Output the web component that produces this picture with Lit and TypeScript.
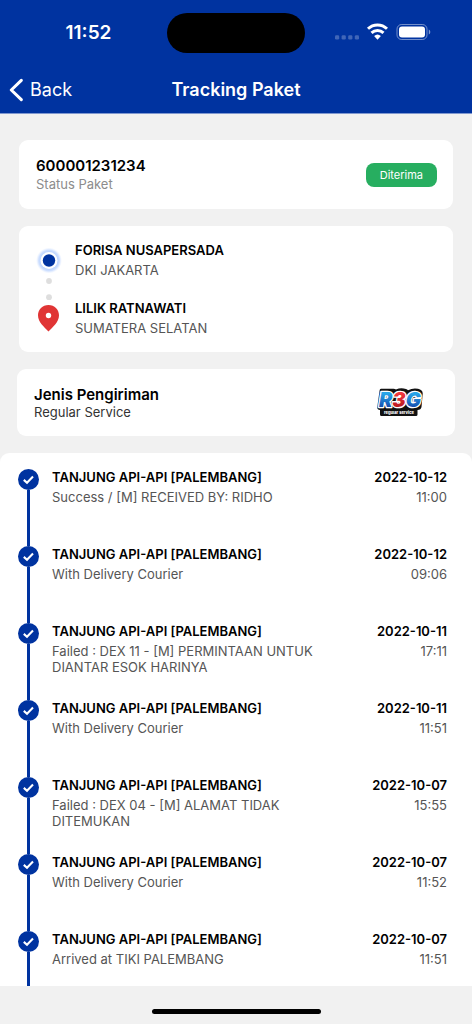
import { LitElement, html, css } from "lit";
import { customElement, property } from "lit/decorators.js";

interface TrackingEvent {
  place: string;
  note: string;
  date: string;
  time: string;
}

const EVENTS: TrackingEvent[] = [
  { place: "TANJUNG API-API [PALEMBANG]", note: "Success / [M] RECEIVED BY: RIDHO", date: "2022-10-12", time: "11:00" },
  { place: "TANJUNG API-API [PALEMBANG]", note: "With Delivery Courier", date: "2022-10-12", time: "09:06" },
  { place: "TANJUNG API-API [PALEMBANG]", note: "Failed : DEX 11 - [M] PERMINTAAN UNTUK DIANTAR ESOK HARINYA", date: "2022-10-11", time: "17:11" },
  { place: "TANJUNG API-API [PALEMBANG]", note: "With Delivery Courier", date: "2022-10-11", time: "11:51" },
  { place: "TANJUNG API-API [PALEMBANG]", note: "Failed : DEX 04 - [M] ALAMAT TIDAK DITEMUKAN", date: "2022-10-07", time: "15:55" },
  { place: "TANJUNG API-API [PALEMBANG]", note: "With Delivery Courier", date: "2022-10-07", time: "11:52" },
  { place: "TANJUNG API-API [PALEMBANG]", note: "Arrived at TIKI PALEMBANG", date: "2022-10-07", time: "11:51" },
];

@customElement("status-bar")
export class StatusBar extends LitElement {
  static styles = css`
    :host {
      display: grid;
      grid-template-columns: 1fr 138px 1fr;
      align-items: center;
      height: 66px;
    }
    .clock {
      justify-self: center;
      padding-left: 10px;
      font-size: 19px;
      font-weight: 600;
      line-height: 24px;
    }
    .island {
      height: 40px;
      border-radius: 20px;
      background: #000;
    }
    .signals {
      display: flex;
      justify-content: flex-end;
      align-items: center;
      padding-right: 40px;
    }
    .signals svg {
      display: block;
    }
  `;

  render() {
    return html`
      <span class="clock">11:52</span>
      <span class="island"></span>
      <span class="signals">
        <svg width="98" height="20" viewBox="0 0 98 20" aria-hidden="true">
          <g fill="#fff" fill-opacity=".25">
            <rect x="1" y="12.3" width="4.2" height="4.2" rx="1.3" />
            <rect x="7.6" y="12.3" width="4.2" height="4.2" rx="1.3" />
            <rect x="14.2" y="12.3" width="4.2" height="4.2" rx="1.3" />
            <rect x="20.8" y="12.3" width="4.2" height="4.2" rx="1.3" />
          </g>
          <g fill="none" stroke="#fff" stroke-width="2.9">
            <path d="M34 5.800a13.600 13.600 0 0 1 19 0" />
            <path d="M37.500 9.900a8.600 8.600 0 0 1 12 0" />
          </g>
          <path fill="#fff" d="M40.100 13.100a5 5 0 0 1 6.800 0l-3.400 3.600z" />
          <rect x="63" y="1.500" width="30" height="15" rx="4.600" fill="none" stroke="#fff" stroke-opacity=".45" />
          <rect x="65" y="3.500" width="26" height="11" rx="3" fill="#fff" />
          <path d="M94.800 6.500v5a2.800 2.800 0 0 0 0-5z" fill="#fff" fill-opacity=".5" />
        </svg>
      </span>
    `;
  }
}

@customElement("tracking-event")
export class TrackingEventRow extends LitElement {
  @property({ attribute: false }) event!: TrackingEvent;

  static styles = css`
    :host {
      display: grid;
      grid-template-columns: 21px 1fr auto;
      column-gap: 13px;
      height: 77px;
      padding: 0 25px 0 18px;
    }
    .rail {
      display: flex;
      flex-direction: column;
      align-items: center;
    }
    .rail svg {
      flex: none;
      display: block;
    }
    .line {
      flex: 1;
      width: 3px;
      background: #0033a0;
    }
    .what,
    .when {
      display: flex;
      flex-direction: column;
      gap: 4px;
    }
    .when {
      align-items: flex-end;
    }
    .main {
      font-size: 13px;
      font-weight: 600;
      line-height: 16px;
      color: #000;
    }
    .sub {
      max-width: 272px;
      font-size: 13px;
      line-height: 16px;
      color: #555;
    }
  `;

  render() {
    const { place, note, date, time } = this.event;
    return html`
      <span class="rail">
        <svg width="21" height="21" viewBox="0 0 21 21" aria-hidden="true">
          <circle cx="10.500" cy="10.500" r="10.500" fill="#0033a0" />
          <path d="M5.800 10.900l3.200 2.800 6-6.100" fill="none" stroke="#fff" stroke-width="2.100" />
        </svg>
        <span class="line"></span>
      </span>
      <span class="what">
        <span class="main">${place}</span>
        <span class="sub">${note}</span>
      </span>
      <span class="when">
        <time class="main">${date}</time>
        <time class="sub">${time}</time>
      </span>
    `;
  }
}

@customElement("app-root")
export class AppRoot extends LitElement {
  static styles = css`
    :host {
      display: flex;
      flex-direction: column;
      height: 100vh;
      background: #f1f1f1;
      font-family: Inter, "Liberation Sans", sans-serif;
      color: #000;
    }
    .top {
      flex: none;
      background: #0033a0;
      color: #fff;
      border-bottom: 1px solid #8098d0;
    }
    .nav {
      display: grid;
      grid-template-columns: 1fr auto 1fr;
      align-items: center;
      height: 47px;
    }
    .back {
      justify-self: start;
      display: flex;
      align-items: center;
      gap: 7px;
      margin: 0;
      padding: 0 0 0 9px;
      border: 0;
      background: none;
      color: inherit;
      font: 400 18px/24px Inter, "Liberation Sans", sans-serif;
      cursor: pointer;
    }
    .heading {
      margin: 0;
      font-size: 18px;
      font-weight: 600;
      line-height: 24px;
    }
    .cards {
      flex: none;
      display: flex;
      flex-direction: column;
      gap: 17px;
      padding: 26px 17px 17px;
    }
    .card {
      display: flex;
      align-items: center;
      justify-content: space-between;
      margin: 0 2px;
      padding: 16px 16px 16px 17px;
      border-radius: 9px;
      background: #fff;
    }
    .wide {
      margin: 0;
      padding-right: 32px;
    }
    .title {
      margin: 0;
      font-size: 15px;
      font-weight: 600;
      line-height: 19px;
    }
    .caption {
      margin: 0;
      font-size: 13px;
      line-height: 18px;
      color: #8c8c8c;
    }
    .service {
      line-height: 16px;
      color: #333;
    }
    .badge {
      padding: 4px 14px;
      border-radius: 8px;
      background: #27ae60;
      color: #fff;
      font-size: 11px;
      line-height: 16px;
    }
    .route {
      justify-content: flex-start;
      align-items: flex-start;
      gap: 13px;
      height: 94px;
    }
    .stops {
      display: flex;
      flex-direction: column;
      gap: 22px;
    }
    .stop {
      display: flex;
      flex-direction: column;
      gap: 4px;
    }
    .name {
      font-size: 13px;
      font-weight: 600;
      line-height: 16px;
    }
    .area {
      font-size: 13px;
      line-height: 16px;
      color: #555;
    }
    .timeline {
      flex: 1;
      min-height: 0;
      margin: 0;
      padding: 16px 0 0;
      list-style: none;
      overflow-y: auto;
      scrollbar-width: none;
      border-radius: 9px 9px 0 0;
      background: #fff;
    }
    .home {
      flex: none;
      display: flex;
      justify-content: center;
      align-items: flex-end;
      height: 28px;
      padding-bottom: 10px;
    }
    .pill {
      width: 169px;
      height: 5px;
      border-radius: 3px;
      background: #000;
    }
  `;

  private logo() {
    return html`
      <svg width="46" height="29" viewBox="0 0 46 29" role="img" aria-label="R3G regular service">
        <defs>
          <linearGradient id="blue" x1="0" y1="0" x2="0" y2="1">
            <stop offset=".25" stop-color="#27a5e8" />
            <stop offset=".8" stop-color="#1650b0" />
          </linearGradient>
          <linearGradient id="red" x1="0" y1="0" x2="0" y2="1">
            <stop offset=".25" stop-color="#f0363c" />
            <stop offset=".8" stop-color="#b8181f" />
          </linearGradient>
        </defs>
        <path d="M4 .800h12.500q1.500 0 2.500.7Q24-.8 29 1.100q1.200.6 2 1.200Q36-.4 41 .800 46 2 45.700 6L44.500 19q-.5 3-4 3v4.500q0 1.500-1.500 1.500H4.500Q3 28 3 26.500V22q-3 0-2.700-3L2.500 3Q2.700.8 4 .8z" fill="#111" />
        <text x="2" y="18.700" font-family="Inter, sans-serif" font-weight="900" font-style="italic" font-size="20" stroke="#fff" stroke-width="2.600" stroke-linejoin="round" paint-order="stroke"><tspan fill="url(#blue)">R</tspan><tspan fill="url(#red)">3</tspan><tspan fill="url(#blue)">G</tspan></text>
        <text x="22" y="26" text-anchor="middle" font-family="Inter, sans-serif" font-weight="800" font-size="4" fill="#fff">regular service</text>
      </svg>
    `;
  }

  render() {
    return html`
      <header class="top">
        <status-bar></status-bar>
        <div class="nav">
          <button class="back" type="button">
            <svg width="14" height="24" viewBox="0 0 14 24" aria-hidden="true">
              <path d="M12.300 2.300L2.300 12l10 9.700" fill="none" stroke="#fff" stroke-width="3" stroke-linecap="round" stroke-linejoin="round" />
            </svg>
            Back
          </button>
          <h1 class="heading">Tracking Paket</h1>
        </div>
      </header>

      <div class="cards">
        <section class="card">
          <div>
            <h2 class="title">600001231234</h2>
            <p class="caption">Status Paket</p>
          </div>
          <span class="badge">Diterima</span>
        </section>

        <section class="card route">
          <svg width="26" height="94" viewBox="1 0 26 94" aria-hidden="true">
            <defs>
              <radialGradient id="halo">
                <stop offset=".6" stop-color="#b5d0ff" />
                <stop offset=".8" stop-color="#cfe0ff" />
                <stop offset="1" stop-color="#e6efff" stop-opacity="0" />
              </radialGradient>
            </defs>
            <circle cx="14" cy="18.500" r="13" fill="url(#halo)" />
            <circle cx="14" cy="18.500" r="8.500" fill="#fff" />
            <circle cx="14" cy="18.500" r="6.200" fill="#0033a0" />
            <circle cx="14" cy="39" r="2.900" fill="#dedede" />
            <circle cx="14" cy="55.200" r="2.900" fill="#dedede" />
            <path d="M13.500 63C7.500 63 3 67.500 3 73.300 3 80 9 85 13.500 89.500 18 85 24 80 24 73.300 24 67.500 19.500 63 13.500 63z" fill="#e03535" />
            <circle cx="13.500" cy="73.500" r="2.700" fill="#fff" />
          </svg>
          <div class="stops">
            <div class="stop">
              <span class="name">FORISA NUSAPERSADA</span>
              <span class="area">DKI JAKARTA</span>
            </div>
            <div class="stop">
              <span class="name">LILIK RATNAWATI</span>
              <span class="area">SUMATERA SELATAN</span>
            </div>
          </div>
        </section>

        <section class="card wide">
          <div>
            <h2 class="title">Jenis Pengiriman</h2>
            <p class="caption service">Regular Service</p>
          </div>
          ${this.logo()}
        </section>
      </div>

      <ol class="timeline">
        ${EVENTS.map((event) => html`<li><tracking-event .event=${event}></tracking-event></li>`)}
      </ol>

      <footer class="home"><span class="pill"></span></footer>
    `;
  }
}
